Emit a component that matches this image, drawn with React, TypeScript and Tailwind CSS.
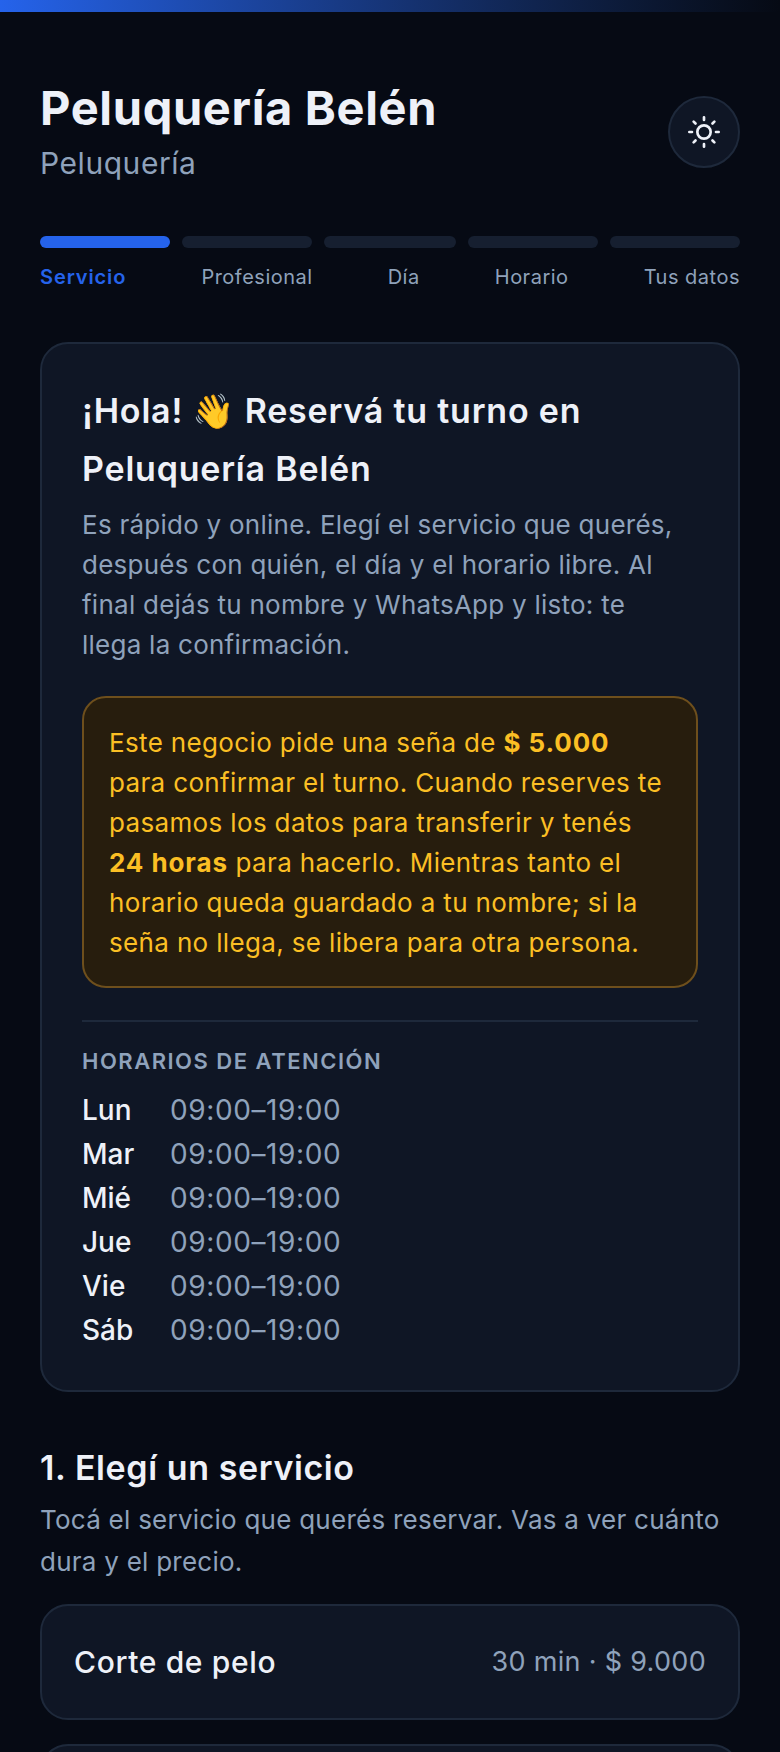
const days = ['Lun', 'Mar', 'Mié', 'Jue', 'Vie', 'Sáb'];
const steps = [
  { label: 'Servicio', active: true },
  { label: 'Profesional' },
  { label: 'Día' },
  { label: 'Horario' },
  { label: 'Tus datos' },
];

function SunIcon() {
  return (
    <svg width="32" height="32" viewBox="0 0 24 24" fill="none" stroke="currentColor" strokeWidth="2" strokeLinecap="round" strokeLinejoin="round">
      <circle cx="12" cy="12" r="5" />
      <path d="M12 1v2M12 21v2M4.22 4.22l1.42 1.42M18.36 18.36l1.42 1.42M1 12h2M21 12h2M4.22 19.78l1.42-1.42M18.36 5.64l1.42-1.42" />
    </svg>
  );
}

export default function App() {
  return (
    <div className="h-[1752px] overflow-hidden bg-[#060a14] text-[#eef1f8] font-['Inter','Noto_Sans',sans-serif]">
      <div className="h-3 bg-gradient-to-r from-[#2563eb] to-[#060a14]" />
      <div className="px-10 pt-[68px]">
        {/* Header */}
        <div className="flex items-center justify-between">
          <div>
            <h1 className="text-[47px] leading-[56px] font-bold tracking-[0.65px]">Peluquería Belén</h1>
            <p className="mt-[7px] text-[30px] leading-[40px] tracking-[0.55px] text-[#8fa2bb]">Peluquería</p>
          </div>
          <button className="w-[72px] h-[72px] rounded-full border-2 border-[#1e293b] bg-[#0f1625] flex items-center justify-center text-[#eef1f8]">
            <SunIcon />
          </button>
        </div>

        {/* Steps */}
        <div className="mt-[53px] grid grid-cols-[130px_130px_132px_130px_130px] gap-3">
          {steps.map(s => (
            <div key={s.label} className={`h-3 rounded-full ${s.active ? 'bg-[#2563eb]' : 'bg-[#161f30]'}`} />
          ))}
        </div>
        <div className="mt-[15px] flex justify-between text-[20px] leading-7 tracking-[0.5px] text-[#8fa2bb]">
          {steps.map(s => (
            <span key={s.label} className={s.active ? 'font-semibold tracking-[0.9px] text-[#2563eb]' : ''}>{s.label}</span>
          ))}
        </div>

        {/* Welcome card */}
        <div className="mt-[51px] rounded-[28px] border-2 border-[#1e293b] bg-[#0f1625] px-10 pt-[38px] pb-[38px]">
          <h2 className="text-[34px] leading-[57.6px] font-semibold tracking-[0.8px]">¡Hola! 👋 Reservá tu turno en Peluquería Belén</h2>
          <p className="mt-2 pr-5 text-[26px] leading-[40px] tracking-[0.25px] text-[#8fa2bb]">
            Es rápido y online. Elegí el servicio que querés, después con quién, el día y el horario libre. Al final dejás tu nombre y WhatsApp y listo: te llega la confirmación.
          </p>
          <div className="mt-[31px] rounded-[24px] border-2 border-[#6e4f1c] bg-[#271d0d] px-[25px] pt-[25px] pb-[23px] text-[26px] leading-[40px] tracking-[0.35px] text-[#fbbf24]">
            Este negocio pide una seña de <strong className="tracking-[0.9px]">$ 5.000</strong> para confirmar el turno. Cuando reserves te pasamos los datos para transferir y tenés <strong className="tracking-[0.9px]">24 horas</strong> para hacerlo. Mientras tanto el horario queda guardado a tu nombre; si la seña no llega, se libera para otra persona.
          </div>
          <div className="mt-8 border-t-2 border-[#1e293b] pt-[23px]">
            <div className="text-[22px] leading-8 font-semibold tracking-[1.5px] text-[#8fa2bb]">HORARIOS DE ATENCIÓN</div>
            <div className="mt-[11px]">
              {days.map(d => (
                <div key={d} className="flex text-[28px] leading-[44px]">
                  <span className="w-[88px] font-medium">{d}</span>
                  <span className="tracking-[0.6px] text-[#8fa2bb]">09:00–19:00</span>
                </div>
              ))}
            </div>
          </div>
        </div>

        {/* Services */}
        <h2 className="mt-14 text-[34px] leading-10 font-semibold tracking-[0.6px]">1. Elegí un servicio</h2>
        <p className="mt-[11px] text-[26px] leading-[42px] tracking-[0.25px] text-[#8fa2bb]">Tocá el servicio que querés reservar. Vas a ver cuánto dura y el precio.</p>

        <div className="mt-[21px] flex flex-col gap-6">
          <div className="h-[116px] shrink-0 rounded-[28px] border-2 border-[#1e293b] bg-[#0f1625] px-8 flex items-center justify-between">
            <span className="text-[30px] font-medium tracking-[0.65px]">Corte de pelo</span>
            <span className="text-[27px] tracking-[0.3px] text-[#8fa2bb]">30 min · $ 9.000</span>
          </div>
          <div className="h-[116px] shrink-0 rounded-[28px] border-2 border-[#1e293b] bg-[#0f1625]" />
        </div>
      </div>
    </div>
  );
}
